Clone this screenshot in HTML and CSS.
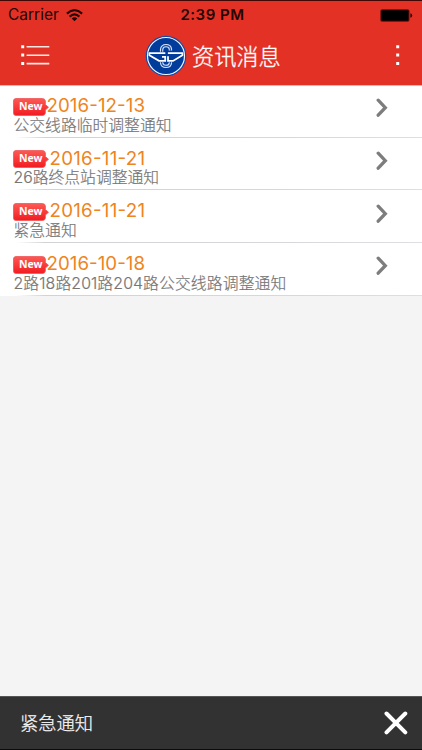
FILE: index.html
```html
<!DOCTYPE html>
<html lang="zh-CN">
<head>
<meta charset="utf-8">
<title>资讯消息</title>
<link rel="stylesheet" href="styles.css">
</head>
<body>
<svg class="defs" width="0" height="0" aria-hidden="true">
  <linearGradient id="tag" x1="0" y1="0" x2="0" y2="1"><stop offset="0" stop-color="#fb5a56"/><stop offset=".5" stop-color="#f93b3b"/><stop offset="1" stop-color="#f01c22"/></linearGradient>
  <symbol id="new" viewBox="0 0 36 18"><path d="M3 .5H29.5Q32 .5 32.4 3V6.5L35.5 9.3 32.4 12V15Q32 17.5 29.5 17.5H3Q.5 17.5.5 15V3Q.5.5 3 .5Z" fill="url(#tag)" stroke="#ef5555" stroke-width=".8"/></symbol>
  <symbol id="chevron" viewBox="0 0 12 20"><path d="M2.2 2.2 9.3 9.7 2.2 17.2" fill="none" stroke="#7d7d7d" stroke-width="3.3" stroke-linecap="round"/></symbol>
</svg>
<div class="app">
  <header class="header">
    <div class="status">
      <div class="carrier"><span>Carrier</span>
        <svg width="17" height="13" viewBox="0 0 17 13" fill="none" stroke="#240504" stroke-width="2.1"><path d="M.9 4.6Q8.5-2.2 16.1 4.6M3.6 7.6Q8.5 3.2 13.4 7.6"/><path d="M5.7 9.4Q8.5 7 11.3 9.4L8.5 12.2Z" fill="#240504" stroke="none"/></svg>
      </div>
      <div class="time">2:39 PM</div>
      <svg class="battery" width="33" height="13" viewBox="0 0 33 13"><rect x=".3" y=".3" width="29.2" height="12.4" rx="1.8" fill="#690e0a"/><rect x="1.3" y="1.3" width="27.2" height="10.4" rx="1" fill="#000"/><path d="M30.4 4.3Q32.2 4.5 32.2 6.5T30.4 8.7Z" fill="#260503"/></svg>
    </div>
    <div class="nav">
      <svg class="nav-icon" width="29" height="22" viewBox="0 0 29 22" fill="#fff"><path d="M.2 1.2h3v3h-3zM.2 9.6h3v3h-3zM.2 18h3v3h-3z"/><path d="M5.6 2h22.7v1.6H5.6zM5.6 10.4h22.7V12H5.6zM5.6 18.8h22.7v1.6H5.6z" fill="#fde8e5"/></svg>
      <div class="brand">
        <svg width="42" height="42" viewBox="0 0 42 42" fill="none"><circle cx="21" cy="21" r="20.3" fill="#164ba4"/><circle cx="21" cy="21" r="18.5" fill="#003c9c" stroke="#f1f5ff" stroke-width="1.2"/><path d="M25.4 15.5V14Q25 10.6 21 10.6T16.6 14.6V27.6Q17 31.4 21 31.4T25.4 28V26.8" stroke="#d5e2fb" stroke-width="3.4"/><path d="M25.4 15.8V14Q25 10.6 21 10.6T16.6 14.6V27.6Q17 31.4 21 31.4T25.4 28V26.4" stroke="#174ca4" stroke-width="1.2"/><path d="M3.5 16.8H38.3V21L28.6 27.2H13.4L3.5 21Z" fill="#003c9c"/><path d="M20.3 18.2H4.4V20.3L14 25.9H20.2V21.8H17M22.9 18.2H37.4V20.3L28 25.9H23V21.3" stroke="#fff" stroke-width="1.8"/></svg>
        <h1>资讯消息</h1>
      </div>
      <svg class="nav-icon" width="4" height="22" viewBox="0 0 4 22" fill="#fff"><path d="M.2 1.2h3v3h-3zM.2 9.6h3v3h-3zM.2 18h3v3h-3z"/></svg>
    </div>
  </header>
  <main class="list">
    <article class="row"><div class="meta"><div class="tag"><svg width="36" height="18"><use href="#new"/></svg><span>New</span></div><svg class="date" width="110" height="24"><text x="99" y="19" text-anchor="end" textLength="98.5" lengthAdjust="spacing">2016-12-13</text></svg></div><p>公交线路临时调整通知</p><svg class="chevron" width="12" height="20"><use href="#chevron"/></svg></article>
    <article class="row"><div class="meta"><div class="tag"><svg width="36" height="18"><use href="#new"/></svg><span>New</span></div><svg class="date" width="110" height="24"><text x="99" y="19" text-anchor="end" textLength="95.5" lengthAdjust="spacing">2016-11-21</text></svg></div><p>26路终点站调整通知</p><svg class="chevron" width="12" height="20"><use href="#chevron"/></svg></article>
    <article class="row"><div class="meta"><div class="tag"><svg width="36" height="18"><use href="#new"/></svg><span>New</span></div><svg class="date" width="110" height="24"><text x="99" y="19" text-anchor="end" textLength="95.5" lengthAdjust="spacing">2016-11-21</text></svg></div><p>紧急通知</p><svg class="chevron" width="12" height="20"><use href="#chevron"/></svg></article>
    <article class="row"><div class="meta"><div class="tag"><svg width="36" height="18"><use href="#new"/></svg><span>New</span></div><svg class="date" width="110" height="24"><text x="99" y="19" text-anchor="end" textLength="98.5" lengthAdjust="spacing">2016-10-18</text></svg></div><p class="long">2路18路201路204路公交线路调整通知</p><svg class="chevron" width="12" height="20"><use href="#chevron"/></svg></article>
  </main>
  <footer class="notice"><span>紧急通知</span><svg width="24" height="24" viewBox="0 0 24 24"><path d="M2.5 2.5 21.3 21.3M21.3 2.5 2.5 21.3" stroke="#fff" stroke-width="4" stroke-linecap="round"/></svg></footer>
</div>
</body>
</html>
```

FILE: styles.css
```css
* { box-sizing: border-box; }
body { margin: 0; font-family: Inter, "Noto Sans CJK SC", sans-serif; }
.defs { position: absolute; }
.app { display: flex; flex-direction: column; height: 750px; background: #f4f4f4; overflow: hidden; }
.header { height: 85px; flex: none; background: #e33225; border-top: 1px solid #400704; }
.status { height: 28px; padding: 0 9px 0 8px; display: grid; grid-template-columns: 1fr auto 1fr; align-items: center; color: #240504; font-size: 15.5px; line-height: 28px; }
.carrier { display: flex; align-items: center; gap: 7px; }
.time { font-size: 15px; font-weight: 600; letter-spacing: .5px; padding-left: 4px; }
.battery { justify-self: end; }
.nav { height: 55px; padding: 0 22px 0 21px; display: flex; align-items: center; }
.nav-icon { flex: none; margin-bottom: 4px; }
.brand { display: flex; align-items: center; gap: 5px; margin: 0 auto 0 95px; }
.brand svg { margin-top: -1px; }
h1 { margin: 0; color: #fff; font-size: 22.2px; line-height: 42px; font-weight: 300; -webkit-text-stroke: .3px; }
.list { flex: none; background: #fff; border-top: 1px solid #ffaba2; }
.row { position: relative; height: 52.65px; padding: 7.7px 0 0 13px; background: linear-gradient(90deg, #fff 16px, #d2d2d4 45px, #d8d8dc 70%, #dedee3) bottom 1px left 0 / 100% 1px no-repeat; }
.row:last-child { height: 52px; background-position: bottom; }
.meta { display: flex; height: 24px; }
.tag { position: relative; width: 33px; height: 18px; margin-top: 4px; flex: none; }
.tag svg { display: block; }
.tag span { position: absolute; left: 6px; top: 0; color: #fff; font: bold 10.5px/17px "Noto Sans", sans-serif; }
.date { overflow: visible; margin-top: -.5px; }
.date text { fill: #ee8420; font-size: 18.7px; }
p { margin: -2px 0 0 .5px; color: #757575; font-size: 15.8px; line-height: 20px; font-weight: 300; white-space: nowrap; -webkit-text-stroke: .2px; }
.long { letter-spacing: .13px; }
.chevron { position: absolute; right: 34px; top: 12.3px; }
.notice { margin-top: auto; height: 54px; padding: 0 14.5px 0 20px; display: flex; align-items: center; justify-content: space-between; background: #323232; border-top: 1px solid #555; border-bottom: 1px solid #0b0b0b; color: #f7f7f7; font-size: 18.3px; font-weight: 300; -webkit-text-stroke: .25px; }
.notice span { margin-top: -2px; }
```
